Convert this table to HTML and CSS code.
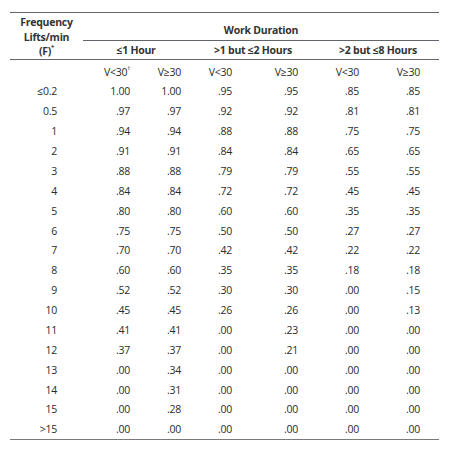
FILE: index.html
```html
<!DOCTYPE html>
<html>
<head>
<meta charset="utf-8">
<link rel="stylesheet" href="styles.css">
</head>
<body>
<table class="lt">
  <colgroup>
    <col class="c-f"><col class="c-a"><col class="c-a"><col class="c-b"><col class="c-b"><col class="c-c"><col class="c-c">
  </colgroup>
  <thead>
    <tr class="r1">
      <th rowspan="2" class="freq">Frequency<br>Lifts/min<br>(F)<sup>*</sup></th>
      <th colspan="6" class="wd">Work Duration</th>
    </tr>
    <tr class="r2">
      <th colspan="2" class="grp">≤1 Hour</th>
      <th colspan="2" class="grp">&gt;1 but ≤2 Hours</th>
      <th colspan="2" class="grp">&gt;2 but ≤8 Hours</th>
    </tr>
  </thead>
  <tbody>
    <tr class="vrow"><td class="f"></td><td class="n1">V&lt;30<sup>†</sup></td><td class="n2">V≥30</td><td class="n3">V&lt;30</td><td class="n4">V≥30</td><td class="n5">V&lt;30</td><td class="n6">V≥30</td></tr>
    <tr><td class="f">≤0.2</td><td class="n1">1.00</td><td class="n2">1.00</td><td class="n3">.95</td><td class="n4">.95</td><td class="n5">.85</td><td class="n6">.85</td></tr>
    <tr><td class="f">0.5</td><td class="n1">.97</td><td class="n2">.97</td><td class="n3">.92</td><td class="n4">.92</td><td class="n5">.81</td><td class="n6">.81</td></tr>
    <tr><td class="f">1</td><td class="n1">.94</td><td class="n2">.94</td><td class="n3">.88</td><td class="n4">.88</td><td class="n5">.75</td><td class="n6">.75</td></tr>
    <tr><td class="f">2</td><td class="n1">.91</td><td class="n2">.91</td><td class="n3">.84</td><td class="n4">.84</td><td class="n5">.65</td><td class="n6">.65</td></tr>
    <tr><td class="f">3</td><td class="n1">.88</td><td class="n2">.88</td><td class="n3">.79</td><td class="n4">.79</td><td class="n5">.55</td><td class="n6">.55</td></tr>
    <tr><td class="f">4</td><td class="n1">.84</td><td class="n2">.84</td><td class="n3">.72</td><td class="n4">.72</td><td class="n5">.45</td><td class="n6">.45</td></tr>
    <tr><td class="f">5</td><td class="n1">.80</td><td class="n2">.80</td><td class="n3">.60</td><td class="n4">.60</td><td class="n5">.35</td><td class="n6">.35</td></tr>
    <tr><td class="f">6</td><td class="n1">.75</td><td class="n2">.75</td><td class="n3">.50</td><td class="n4">.50</td><td class="n5">.27</td><td class="n6">.27</td></tr>
    <tr><td class="f">7</td><td class="n1">.70</td><td class="n2">.70</td><td class="n3">.42</td><td class="n4">.42</td><td class="n5">.22</td><td class="n6">.22</td></tr>
    <tr><td class="f">8</td><td class="n1">.60</td><td class="n2">.60</td><td class="n3">.35</td><td class="n4">.35</td><td class="n5">.18</td><td class="n6">.18</td></tr>
    <tr><td class="f">9</td><td class="n1">.52</td><td class="n2">.52</td><td class="n3">.30</td><td class="n4">.30</td><td class="n5">.00</td><td class="n6">.15</td></tr>
    <tr><td class="f">10</td><td class="n1">.45</td><td class="n2">.45</td><td class="n3">.26</td><td class="n4">.26</td><td class="n5">.00</td><td class="n6">.13</td></tr>
    <tr><td class="f">11</td><td class="n1">.41</td><td class="n2">.41</td><td class="n3">.00</td><td class="n4">.23</td><td class="n5">.00</td><td class="n6">.00</td></tr>
    <tr><td class="f">12</td><td class="n1">.37</td><td class="n2">.37</td><td class="n3">.00</td><td class="n4">.21</td><td class="n5">.00</td><td class="n6">.00</td></tr>
    <tr><td class="f">13</td><td class="n1">.00</td><td class="n2">.34</td><td class="n3">.00</td><td class="n4">.00</td><td class="n5">.00</td><td class="n6">.00</td></tr>
    <tr><td class="f">14</td><td class="n1">.00</td><td class="n2">.31</td><td class="n3">.00</td><td class="n4">.00</td><td class="n5">.00</td><td class="n6">.00</td></tr>
    <tr><td class="f">15</td><td class="n1">.00</td><td class="n2">.28</td><td class="n3">.00</td><td class="n4">.00</td><td class="n5">.00</td><td class="n6">.00</td></tr>
    <tr><td class="f">&gt;15</td><td class="n1">.00</td><td class="n2">.00</td><td class="n3">.00</td><td class="n4">.00</td><td class="n5">.00</td><td class="n6">.00</td></tr>
  </tbody>
</table>
</body>
</html>
```

FILE: styles.css
```css
html, body {
  margin: 0;
  padding: 0;
  background: #ffffff;
}
body {
  padding: 12px 0 0 10px;
}
.lt {
  border-collapse: collapse;
  table-layout: fixed;
  width: 429px;
  font-family: "Open Sans", "Noto Sans", sans-serif;
  font-size: 10.5px;
  letter-spacing: -0.25px;
  color: #2b2b2b;
  border-top: 1.5px solid #5f656b;
  border-bottom: 1.5px solid #7a7a7a;
}
.c-f { width: 73px; }
.c-a { width: 53px; }
.c-b { width: 64px; }
.c-c { width: 61px; }
th, td {
  padding: 0;
  font-weight: normal;
}
th {
  font-weight: 700;
  text-align: center;
  color: #333333;
}
.r1 th.wd {
  height: 24px;
  vertical-align: bottom;
  padding-bottom: 3px;
  line-height: 14px;
  border-bottom: 1px solid #5f656b;
}
.freq {
  line-height: 14.2px;
  vertical-align: bottom;
  padding-bottom: 1px;
  border-bottom: 1px solid #5f656b;
}
.r2 th.grp {
  height: 18px;
  line-height: 14px;
  vertical-align: middle;
  border-bottom: 1px solid #5f656b;
}
sup {
  font-size: 6px;
  vertical-align: top;
  line-height: 8px;
  position: relative;
  top: -1px;
}
td {
  height: 19.88px;
  line-height: 14px;
  text-align: right;
  vertical-align: middle;
}
.vrow td {
  height: 19.5px;
  padding-top: 2px;
}
td.f { padding-right: 26px; }
td.n1 { padding-right: 6px; }
td.n2 { padding-right: 8px; }
td.n3 { padding-right: 21px; }
td.n4 { padding-right: 19px; }
td.n5 { padding-right: 19px; }
td.n6 { padding-right: 19px; }
```
